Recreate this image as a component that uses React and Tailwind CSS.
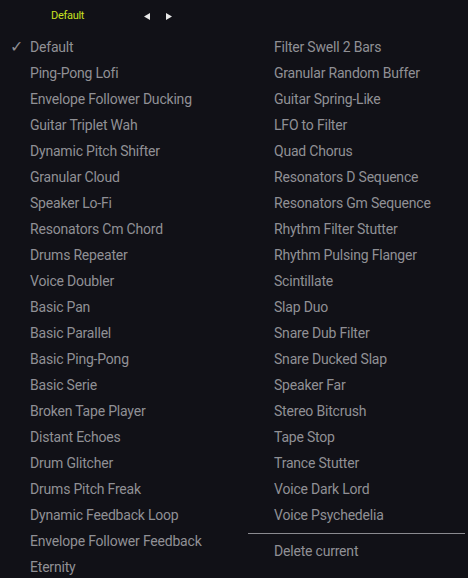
import React from 'react';

const left = [
    'Default',
    'Ping-Pong Lofi',
    'Envelope Follower Ducking',
    'Guitar Triplet Wah',
    'Dynamic Pitch Shifter',
    'Granular Cloud',
    'Speaker Lo-Fi',
    'Resonators Cm Chord',
    'Drums Repeater',
    'Voice Doubler',
    'Basic Pan',
    'Basic Parallel',
    'Basic Ping-Pong',
    'Basic Serie',
    'Broken Tape Player',
    'Distant Echoes',
    'Drum Glitcher',
    'Drums Pitch Freak',
    'Dynamic Feedback Loop',
    'Envelope Follower Feedback',
    'Eternity',
];

const right = [
    'Filter Swell 2 Bars',
    'Granular Random Buffer',
    'Guitar Spring-Like',
    'LFO to Filter',
    'Quad Chorus',
    'Resonators D Sequence',
    'Resonators Gm Sequence',
    'Rhythm Filter Stutter',
    'Rhythm Pulsing Flanger',
    'Scintillate',
    'Slap Duo',
    'Snare Dub Filter',
    'Snare Ducked Slap',
    'Speaker Far',
    'Stereo Bitcrush',
    'Tape Stop',
    'Trance Stutter',
    'Voice Dark Lord',
    'Voice Psychedelia',
];

function Item({ label, checked }) {
    return (
        <div className="h-[26px] flex items-center">
            <span className="w-[30px] pl-[10px] text-[16px] text-[#8e8e93]">{checked ? '✓' : ''}</span>
            <span>{label}</span>
        </div>
    );
}

export default function App() {
    return (
        <div className="w-[468px] h-[578px] overflow-hidden bg-[#111117] text-[#909095] text-[14px] tracking-[-0.2px]" style={{ fontFamily: 'Roboto, sans-serif' }}>
            <div className="h-[34px] flex items-center pb-[2px]">
                <span className="ml-[51px] w-[93px] text-[11px] tracking-[-0.3px] text-[#c8e020]">Default</span>
                <div className="flex items-center gap-[16px] pt-[1px]">
                    <svg width="6" height="7" viewBox="0 0 6 7"><path d="M6 0 L0 3.5 L6 7 Z" fill="#e8e8e8" /></svg>
                    <svg width="6" height="7" viewBox="0 0 6 7"><path d="M0 0 L6 3.5 L0 7 Z" fill="#e8e8e8" /></svg>
                </div>
            </div>
            <div className="flex">
                <div className="w-[248px]">
                    {left.map((l, i) => <Item key={l} label={l} checked={i === 0} />)}
                </div>
                <div className="flex-1 pr-[3px]">
                    {right.map(r => (
                        <div key={r} className="h-[26px] flex items-center pl-[26px]">{r}</div>
                    ))}
                    <div className="mt-[5px] mb-[4px] h-px bg-[#8a8a90]" />
                    <div className="h-[26px] flex items-center pl-[26px]">Delete current</div>
                </div>
            </div>
        </div>
    );
}
